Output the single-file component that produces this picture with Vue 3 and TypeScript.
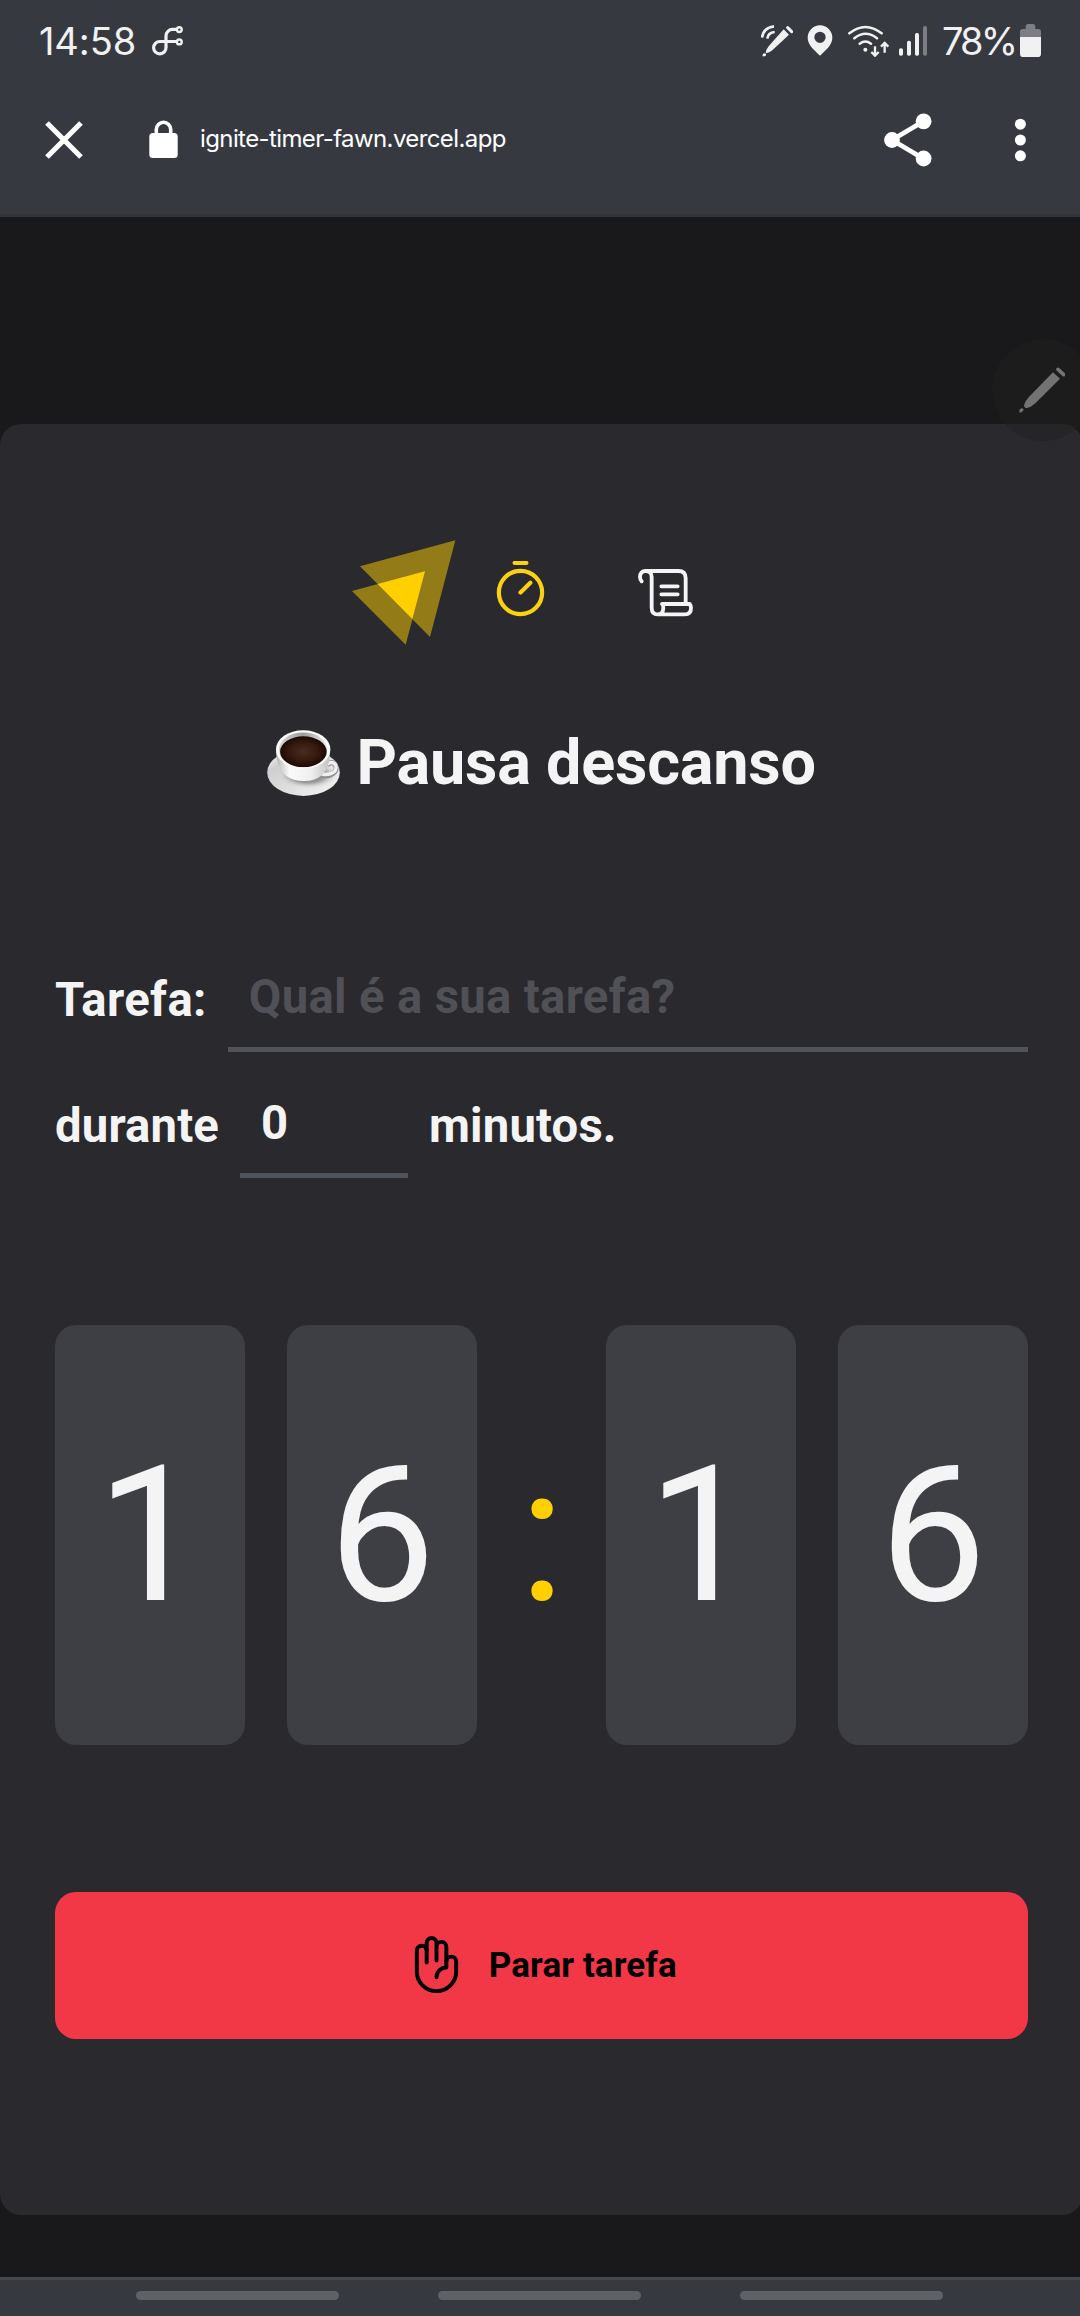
<script setup lang="ts">
import { ref } from 'vue'

const title = 'Pausa descanso'
const minutes = ref(0)
const digits = { minutes: ['1', '6'], seconds: ['1', '6'] }
</script>

<template>
  <div class="screen">
    <header class="browser">
      <div class="status">
        <span class="clock">14:58</span>
        <svg class="loop" width="35" height="33" viewBox="150 24 35 33" fill="none" stroke="#f1f1f1" stroke-width="3.2">
          <circle cx="179.3" cy="29.6" r="2.4" stroke-width="2.4" />
          <circle cx="179.3" cy="41.9" r="2.4" stroke-width="2.4" />
          <path d="M177 29.4h-4.500a6.500 6.500 0 0 0-6.500 6.500v11.500a6.200 6.200 0 1 1-6.200-5.900h17" />
        </svg>
        <div class="grow"></div>
        <svg class="pen" width="32" height="32" viewBox="93 72 96 96">
          <path d="M161 85l16 16-50 47q-8 7-20 9q1-12 9-21z" fill="#f1f1f1" />
          <path d="M173 80l12 12" stroke="#f1f1f1" stroke-width="9" stroke-linecap="round" />
          <path d="M97 166l2-8q6-3 9 1q2 4-3 7z" fill="#f1f1f1" />
          <path d="M96 110q4-30 36-34M112 113q2-18 22-20" fill="none" stroke="#f1f1f1" stroke-width="8" />
        </svg>
        <svg class="pin" width="26" height="31" viewBox="232 74 78 93">
          <path fill-rule="evenodd" fill="#f1f1f1" d="M271 75a37 37 0 0 1 37 37c0 22-20 37-37 54c-17-17-37-32-37-54a37 37 0 0 1 37-37zM271 94a17 17 0 1 0 0 34a17 17 0 1 0 0-34z" />
        </svg>
        <svg class="wifi" width="42" height="32" viewBox="355 73 126 96" fill="none" stroke="#f1f1f1" stroke-width="7.500" stroke-linecap="round">
          <path d="M359 98q48-38 97 0M374 113q34-27 68 0M390 129q17-13 34 0" />
          <circle cx="407" cy="147" r="6" fill="#f1f1f1" stroke="none" />
          <path d="M436 137v27M425 154l11 11l11-11M465 156v-27M454 138l11-11l11 11" stroke-width="7" stroke-linecap="butt" />
        </svg>
        <svg class="signal" width="28" height="30" viewBox="507 77 84 90">
          <rect x="507" y="144" width="12" height="22" rx="5" fill="#f1f1f1" />
          <rect x="531" y="121" width="12" height="45" rx="5" fill="#f1f1f1" />
          <rect x="555" y="98" width="12" height="68" rx="5" fill="#f1f1f1" />
          <rect x="579" y="77" width="12" height="89" rx="5" fill="#7d7e83" />
        </svg>
        <span class="percent">78%</span>
        <svg class="battery" width="21" height="33" viewBox="870 72 63 99">
          <path d="M870 111V95q0-8 8-8h9v-7q0-8 8-8h13q8 0 8 8v7h9q8 0 8 8v16z" fill="#7d7e83" />
          <path d="M870 111h63v50q0 10-10 10h-43q-10 0-10-10z" fill="#f1f1f1" />
        </svg>
      </div>
      <div class="address">
        <svg class="close" width="38" height="38" viewBox="0 0 38 38" stroke="#fff" stroke-width="5.200"><path d="M2 2l34 34M36 2L2 36" /></svg>
        <svg class="lock" width="29" height="38" viewBox="0 0 29 38">
          <path d="M7.300 15V9.500a7.200 7.200 0 0 1 14.400 0V15" fill="none" stroke="#fff" stroke-width="3.600" />
          <rect x="0.300" y="13" width="28.400" height="25" rx="3.500" fill="#fff" />
        </svg>
        <span class="url">ignite-timer-fawn.vercel.app</span>
        <div class="grow"></div>
        <svg class="share" width="48" height="54" viewBox="0 0 48 54" fill="#fff">
          <path d="M40 8L8 27l32 19" fill="none" stroke="#fff" stroke-width="4.800" />
          <circle cx="39.600" cy="8.300" r="7.900" /><circle cx="8" cy="27" r="7.900" /><circle cx="39.600" cy="45.500" r="7.900" />
        </svg>
        <svg class="more" width="12" height="44" viewBox="0 0 12 44" fill="#fff">
          <circle cx="6.400" cy="6.200" r="5.500" /><circle cx="6.400" cy="22" r="5.500" /><circle cx="6.400" cy="37.800" r="5.500" />
        </svg>
      </div>
    </header>

    <main class="page">
      <section class="card">
        <nav class="menu">
          <svg class="logo" width="105" height="105" viewBox="66 59 315 315">
            <path d="M90 138L376 60L300 350zM66 212L285 153L227 373z" fill="#937c18" />
            <path d="M143 191L285 153L247 296z" fill="#ffd000" />
          </svg>
          <svg class="timer" width="63" height="63" viewBox="0 0 256 256" fill="none" stroke="#fcd013" stroke-width="17" stroke-linecap="round">
            <circle cx="128" cy="128" r="88" /><path d="M128 128l40-40M104 8h48" />
          </svg>
          <svg class="scroll" width="63" height="63" viewBox="0 0 189 189" fill="none" stroke="#f4f4f4" stroke-width="11.500" stroke-linecap="round" stroke-linejoin="round">
            <path d="M23 61q-5-5-5-13q0-18 17-18h98q22 0 22 22v74M35 30q18 0 18 18v92q0 20 18 20h82q18 0 18-20q0-6-4-11H84q5 5 4 12q-1 19-17 19" />
            <path d="M82 76h49M82 100h49" />
          </svg>
        </nav>

        <h1 class="title">
          <svg class="cup" width="74" height="66" viewBox="0 0 74 66">
            <defs>
              <linearGradient id="saucer" x1="0" y1="0" x2="1" y2="1">
                <stop offset="0" stop-color="#fff" /><stop offset=".25" stop-color="#cfcfcf" />
                <stop offset=".55" stop-color="#dedede" /><stop offset="1" stop-color="#f6f6f6" />
              </linearGradient>
              <radialGradient id="saucerShade" cx=".55" cy=".45" r=".5">
                <stop offset="0" stop-color="#555" /><stop offset=".6" stop-color="#8f8f8f" stop-opacity=".8" /><stop offset="1" stop-color="#ddd" stop-opacity="0" />
              </radialGradient>
              <linearGradient id="body" x1="0" y1="0" x2="1" y2="0">
                <stop offset="0" stop-color="#b5b5b5" /><stop offset=".25" stop-color="#fafafa" />
                <stop offset=".65" stop-color="#efefef" /><stop offset="1" stop-color="#c2c2c2" />
              </linearGradient>
              <linearGradient id="inner" x1="0" y1="0" x2="1" y2="0">
                <stop offset="0" stop-color="#d8d8d8" /><stop offset=".5" stop-color="#9c9c9c" /><stop offset="1" stop-color="#eee" />
              </linearGradient>
              <radialGradient id="coffee"><stop offset="0" stop-color="#4a2c20" /><stop offset=".6" stop-color="#351a10" /><stop offset="1" stop-color="#1d0903" /></radialGradient>
            </defs>
            <ellipse cx="36.500" cy="42.500" rx="36.300" ry="23.400" fill="url(#saucer)" />
            <ellipse cx="38" cy="46" rx="30" ry="14" fill="url(#saucerShade)" />
            <path d="M60 35c5-5 10-1 9 4c-1 5-8 8-14 6" fill="none" stroke="#8a8a8a" stroke-width="5" />
            <path d="M60 34.500c5-4 10-1 9 4c-1 5-8 7-14 5.500" fill="none" stroke="#f0f0f0" stroke-width="3.400" />
            <path d="M9 20c0 18 8 31 28 31S63 38 63 20z" fill="url(#body)" />
            <ellipse cx="36.200" cy="19.500" rx="27.200" ry="19.300" fill="#fafafa" />
            <ellipse cx="36.200" cy="19.800" rx="24.300" ry="17.400" fill="url(#inner)" />
            <ellipse cx="36.400" cy="21.700" rx="23.300" ry="15.400" fill="url(#coffee)" />
          </svg>
          <span>{{ title }}</span>
        </h1>

        <form class="task">
          <div class="line">
            <label class="wide" for="task">Tarefa:</label>
            <input id="task" class="field name" placeholder="Qual é a sua tarefa?" />
          </div>
          <div class="line">
            <label for="amount">durante</label>
            <input id="amount" v-model="minutes" class="field amount" />
            <span class="unit">minutos.</span>
          </div>
        </form>

        <div class="countdown">
          <span v-for="(d, i) in digits.minutes" :key="'m' + i" class="digit">{{ d }}</span>
          <span class="colon">:</span>
          <span v-for="(d, i) in digits.seconds" :key="'s' + i" class="digit">{{ d }}</span>
        </div>

        <button class="stop" type="button">
          <svg width="63" height="63" viewBox="0 0 256 256" fill="none" stroke="#000" stroke-width="16" stroke-linecap="round" stroke-linejoin="round">
            <path d="M88 116V68a20 20 0 0 0-40 0v84a80 80 0 0 0 160 0v-40a20 20 0 0 0-40 0" />
            <path d="M88 68V36a20 20 0 0 1 40 0v72M128 52a20 20 0 0 1 40 0v84a40 40 0 0 0-40 40" />
          </svg>
          <span>Parar tarefa</span>
        </button>
      </section>

      <div class="edge">
        <svg width="46" height="46" viewBox="0 0 138 138" fill="#737375">
          <path d="M102 16l21 19l-74 74q-12 12-28 15q-6-3-6-9q4-14 14-24z" />
          <path d="M117 7l17 16" stroke="#737375" stroke-width="11" stroke-linecap="round" />
          <path d="M1 134q-1-8 6-10q7 0 7 5q-4 7-11 8z" />
        </svg>
      </div>
    </main>

    <footer class="gestures"><i></i><i></i><i></i></footer>
  </div>
</template>

<style>
body { margin: 0; background: #19191b; }
</style>

<style scoped>
.screen { width: 1080px; height: 2316px; overflow: hidden; display: flex; flex-direction: column; background: #19191b; font-family: Roboto, sans-serif; color: #f4f4f4; }
svg { display: block; flex: none; }
.grow { flex: 1; }
.browser { box-sizing: border-box; height: 217px; flex: none; background: #373941; border-bottom: 3px solid #323438; }
.status { height: 81px; display: flex; align-items: center; padding: 0 39px 0 39px; color: #f1f1f1; font-family: Inter, sans-serif; font-size: 38px; line-height: 81px; white-space: nowrap; }
.clock { width: 111px; padding-top: 2px; letter-spacing: -.1px; }
.pin { margin-left: 14px; }
.wifi { margin-left: 15px; }
.signal { margin-left: 9px; }
.percent { width: 77px; margin-left: 15px; padding-top: 2px; letter-spacing: -2.9px; }
.battery { margin-left: 1px; }
.address { height: 118px; display: flex; align-items: center; padding: 0 54px 0 45px; color: #fff; }
.lock { margin-left: 66px; margin-top: -2px; }
.url { margin: -3px 0 0 22px; font: 400 24px/32px Inter, sans-serif; letter-spacing: -.6px; white-space: nowrap; }
.share { margin-right: 82px; }

.page { position: relative; flex: 1; padding-top: 207px; }
.card { box-sizing: border-box; width: 1083px; height: 1791px; padding: 115px 55px 0; border-radius: 21px; background: #29292e; }
.menu { display: flex; align-items: center; height: 107px; padding-left: 297px; }
.timer { margin-left: 32px; }
.scroll { margin-left: 82px; }
.title { display: flex; align-items: center; height: 74px; margin: 80px 0 0 212px; font-size: 63px; line-height: 74px; font-weight: 700; white-space: nowrap; }
.title span { margin-left: 15.500px; letter-spacing: -.24px; }
.task { margin-top: 147px; font-size: 47.25px; font-weight: 700; letter-spacing: .16px; }
.line { display: flex; align-items: center; height: 105px; }
.line + .line { margin-top: 21px; }
.wide { letter-spacing: .4px; }
.field { box-sizing: border-box; height: 105px; min-width: 0; border: 0; border-bottom: 5px solid #51535a; padding: 0 21px; background: transparent; color: inherit; font: inherit; outline: 0; border-radius: 0; }
.field::placeholder { color: #505057; opacity: 1; }
.name { flex: 1; margin-left: 21px; letter-spacing: .33px; }
.amount { width: 168px; margin-left: 21px; }
.unit { margin-left: 21px; }
.countdown { display: flex; gap: 42px; height: 420px; margin-top: 147px; }
.digit, .colon { font-size: 190px; line-height: 420px; text-align: center; }
.digit { flex: 1; border-radius: 21px; background: #3e3f44; }
.colon { width: 45px; color: #ffd000; }
.stop { width: 100%; height: 147px; margin-top: 147px; padding: 0 1px 0 0; border: 0; border-radius: 21px; background: #f23846; color: #000; display: flex; align-items: center; justify-content: center; gap: 20.500px; font: 700 35px/41px Roboto, sans-serif; letter-spacing: .1px; }

.edge { position: absolute; left: 992px; top: 122px; width: 102px; height: 102px; border-radius: 50%; background: rgba(32, 32, 32, .4); box-sizing: border-box; padding: 28px 0 0 27px; }
.gestures { box-sizing: border-box; height: 39px; flex: none; border-top: 3px solid #474747; background: #373941; display: flex; justify-content: center; gap: 99px; padding: 11px 1px 0 0; }
.gestures i { width: 203px; height: 9px; border-radius: 5px; background: #5e6166; }
</style>
